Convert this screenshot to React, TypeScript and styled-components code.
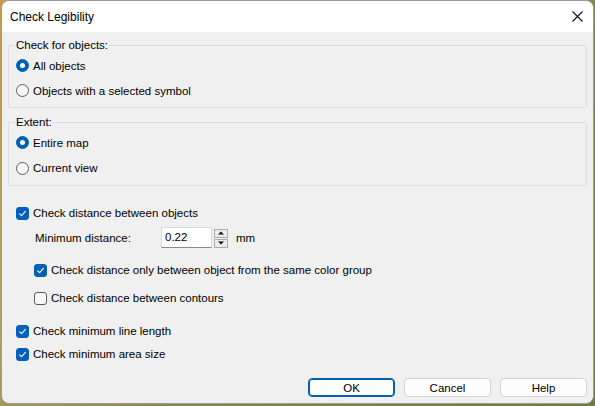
import React from "react";
import styled, { createGlobalStyle } from "styled-components";

const Global = createGlobalStyle`
  html, body { margin: 0; padding: 0; }
  body {
    width: 595px;
    height: 406px;
    overflow: hidden;
    background: linear-gradient(135deg, #c99a52 0%, #b8a063 30%, #7f8a4a 60%, #6d7a45 100%);
    font-family: "Liberation Sans", Arial, sans-serif;
    font-size: 11.5px;
    color: #000;
  }
`;

const Window = styled.div`
  margin-left: 1px;
  width: 591px;
  height: 402px;
  border: 1px solid #9a9a9a;
  border-radius: 8px;
  background: #f0f0f0;
  display: flex;
  flex-direction: column;
  overflow: hidden;
`;

const TitleBar = styled.div`
  height: 31px;
  flex: none;
  background: #fff;
  display: flex;
  align-items: center;
  justify-content: space-between;
  padding: 0 9px 0 8px;
  font-size: 12px;
`;

const CloseButton = styled.div`
  width: 12px;
  height: 12px;
  margin-right: 1px;
  display: flex;
  align-items: center;
  justify-content: center;
`;

const Body = styled.div`
  flex: 1;
  display: flex;
  flex-direction: column;
  padding: 6px 6px 0 6px;
`;

const Group = styled.fieldset<{ $top?: number }>`
  margin: ${(p) => p.$top ?? 0}px 0 0 0;
  padding: 0 7px 4px 7px;
  border: 1px solid #dcdcdc;
  border-radius: 2px;
  min-width: 0;
`;

const Legend = styled.legend`
  padding: 0 1px;
  margin-left: -1px;
  line-height: 14px;
`;

const Row = styled.label<{ $top?: number; $indent?: number; $h?: number }>`
  display: flex;
  align-items: center;
  height: ${(p) => p.$h ?? 25}px;
  margin-top: ${(p) => p.$top ?? 0}px;
  padding-left: ${(p) => p.$indent ?? 0}px;
  gap: 4px;
  white-space: nowrap;
`;

const Radio = styled.span<{ $on?: boolean }>`
  box-sizing: border-box;
  width: 13px;
  height: 13px;
  border-radius: 50%;
  flex: none;
  display: flex;
  align-items: center;
  justify-content: center;
  background: ${(p) => (p.$on ? "#005fb8" : "#f7f7f7")};
  border: 1px solid ${(p) => (p.$on ? "#005fb8" : "#5c5c5c")};
  &::after {
    content: "";
    display: ${(p) => (p.$on ? "block" : "none")};
    width: 5px;
    height: 5px;
    border-radius: 50%;
    background: #fff;
  }
`;

const Box = styled.span<{ $on?: boolean }>`
  box-sizing: border-box;
  width: 13px;
  height: 13px;
  border-radius: 3px;
  flex: none;
  display: flex;
  align-items: center;
  justify-content: center;
  background: ${(p) => (p.$on ? "#005fb8" : "#f7f7f7")};
  border: 1px solid ${(p) => (p.$on ? "#005fb8" : "#5c5c5c")};
`;

const Options = styled.div`
  display: flex;
  flex-direction: column;
  padding-left: 8px;
`;

const DistanceRow = styled.div`
  display: flex;
  align-items: center;
  height: 21px;
  margin-top: 4px;
  padding-left: 19px;
`;

const FieldLabel = styled.span`
  width: 126px;
`;

const Input = styled.div`
  box-sizing: border-box;
  width: 51px;
  height: 21px;
  background: #fff;
  border: 1px solid #dadada;
  border-bottom-color: #8a8a8a;
  padding: 2px 0 0 3px;
  line-height: 15px;
`;

const Spinner = styled.div`
  display: flex;
  flex-direction: column;
  gap: 1px;
  margin-left: 2px;
  margin-top: 1px;
`;

const SpinButton = styled.div`
  box-sizing: border-box;
  width: 14px;
  height: 9px;
  border: 1px solid #acacac;
  background: #ececec;
  display: flex;
  align-items: center;
  justify-content: center;
`;

const Unit = styled.span`
  margin-left: 8px;
`;

const Buttons = styled.div`
  display: flex;
  justify-content: flex-end;
  gap: 9px;
  margin-top: auto;
  margin-bottom: 6px;
  padding-right: 0;
`;

const Button = styled.div<{ $primary?: boolean }>`
  box-sizing: border-box;
  width: 87px;
  height: 19px;
  border-radius: 4px;
  background: #fdfdfd;
  border: 1px solid ${(p) => (p.$primary ? "#005fb8" : "#d2d2d2")};
  box-shadow: ${(p) => (p.$primary ? "inset 0 0 0 1px #005fb8" : "none")};
  display: flex;
  align-items: center;
  justify-content: center;
`;

const Check = () => (
  <svg width="9" height="9" viewBox="0 0 9 9">
    <path d="M1.6 4.8 L3.6 6.7 L7.4 2.4" fill="none" stroke="#fff" strokeWidth="1.1" strokeLinecap="round" strokeLinejoin="round" />
  </svg>
);

const Arrow = ({ up }: { up?: boolean }) => (
  <svg width="6" height="4" viewBox="0 0 6 4">
    <path d={up ? "M0 3.5 L3 0.5 L6 3.5 Z" : "M0 0.5 L3 3.5 L6 0.5 Z"} fill="#111" />
  </svg>
);

const CheckRow = ({
  on,
  text,
  top,
  indent,
}: {
  on?: boolean;
  text: string;
  top: number;
  indent?: number;
}) => (
  <Row $h={20} $top={top} $indent={indent}>
    <Box $on={on}>{on && <Check />}</Box>
    <span>{text}</span>
  </Row>
);

export default function App() {
  return (
    <>
      <Global />
      <Window>
        <TitleBar>
          <span>Check Legibility</span>
          <CloseButton>
            <svg width="11" height="11" viewBox="0 0 11 11">
              <path d="M0.5 0.5 L10.5 10.5 M10.5 0.5 L0.5 10.5" stroke="#111" strokeWidth="1.1" />
            </svg>
          </CloseButton>
        </TitleBar>
        <Body>
          <Group>
            <Legend>Check for objects:</Legend>
            <Row $top={1}>
              <Radio $on />
              <span>All objects</span>
            </Row>
            <Row>
              <Radio />
              <span>Objects with a selected symbol</span>
            </Row>
          </Group>
          <Group $top={7}>
            <Legend>Extent:</Legend>
            <Row $top={1}>
              <Radio $on />
              <span>Entire map</span>
            </Row>
            <Row $h={26}>
              <Radio />
              <span>Current view</span>
            </Row>
          </Group>
          <Options>
            <CheckRow on text="Check distance between objects" top={17} />
            <DistanceRow>
              <FieldLabel>Minimum distance:</FieldLabel>
              <Input>0.22</Input>
              <Spinner>
                <SpinButton>
                  <Arrow up />
                </SpinButton>
                <SpinButton>
                  <Arrow />
                </SpinButton>
              </Spinner>
              <Unit>mm</Unit>
            </DistanceRow>
            <CheckRow on indent={18} text="Check distance only between object from the same color group" top={12} />
            <CheckRow indent={18} text="Check distance between contours" top={8} />
            <CheckRow on text="Check minimum line length" top={13} />
            <CheckRow text="Check minimum area size" on top={3} />
          </Options>
          <Buttons>
            <Button $primary>OK</Button>
            <Button>Cancel</Button>
            <Button>Help</Button>
          </Buttons>
        </Body>
      </Window>
    </>
  );
}
